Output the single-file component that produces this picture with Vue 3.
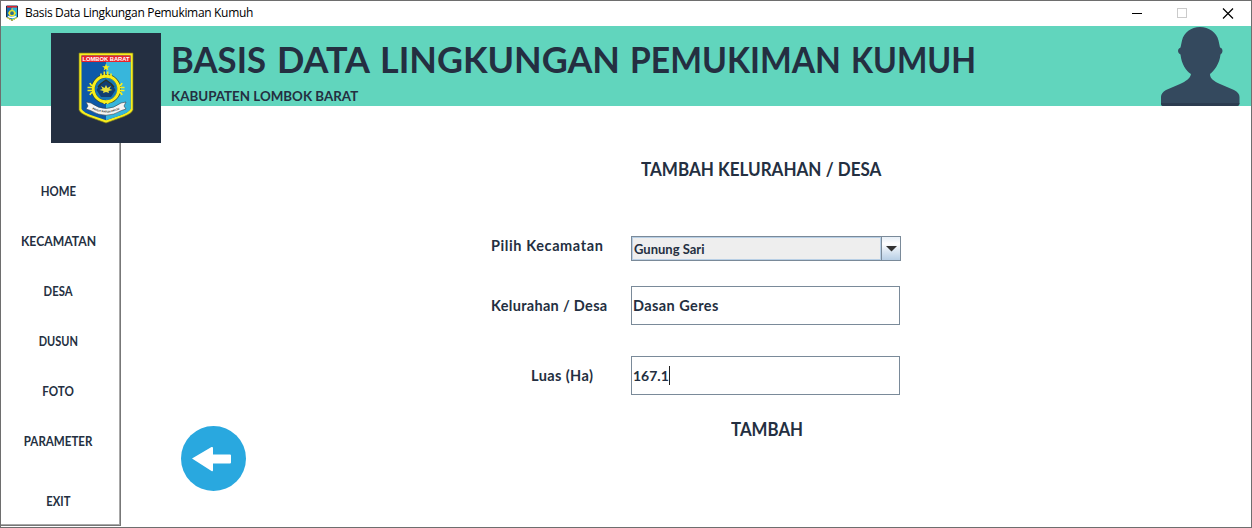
<script setup>
const menu = [
  { label: 'HOME', cls: 'home' },
  { label: 'KECAMATAN', cls: 'kecamatan' },
  { label: 'DESA', cls: 'desa' },
  { label: 'DUSUN', cls: 'dusun' },
  { label: 'FOTO', cls: 'foto' },
  { label: 'PARAMETER', cls: 'parameter' },
  { label: 'EXIT', cls: 'exit' },
]
const titleWords = [
  { word: 'BASIS', x: 0, width: 95 },
  { word: 'DATA', x: 106, width: 93 },
  { word: 'LINGKUNGAN', x: 209, width: 240 },
  { word: 'PEMUKIMAN', x: 459, width: 211 },
  { word: 'KUMUH', x: 680, width: 125 },
]
</script>

<template>
  <div class="window">
    <div class="titlebar">
      <svg class="app-icon" viewBox="0 0 16 16">
        <path d="M2.5 1H13.5V12L8 15.5L2.5 12Z" fill="#1470b4" stroke="#1c3350" />
        <path d="M8 2H13V12L8 15Z" fill="#29b4d8" />
        <path d="M3 1H13V2.6H3Z" fill="#d9232e" />
        <circle cx="8" cy="8.2" r="2.6" fill="#2b6e8d" stroke="#f4e72a" stroke-width="1.4" />
        <path d="M8 3.2V5.5M4 8.2H6M10 8.2H12" stroke="#f4e72a" stroke-width="1.2" />
        <path d="M4 11.4Q8 13.6 12 11.4" fill="none" stroke="#fff" stroke-width="1.5" />
        <path d="M3 12.6L8 15.3L13 12.6" fill="none" stroke="#f4e72a" />
      </svg>
      <span class="caption">Basis Data Lingkungan Pemukiman Kumuh</span>
      <svg class="controls" width="120" height="25" viewBox="0 0 120 25" shape-rendering="crispEdges">
        <path d="M1 12.5H11" stroke="#000" />
        <rect x="46.500" y="7.500" width="9" height="9" fill="none" stroke="#cbcbcb" />
        <path d="M92 7.500L102 17.500M102 7.500L92 17.500" stroke="#000" stroke-width="1.200" shape-rendering="auto" />
      </svg>
    </div>

    <header class="header">
      <div class="logo">
        <svg class="crest" width="56" height="72" viewBox="0 0 56 72">
          <path d="M1 1H55V58Q54 61 46 64.500L28 71L10 64.500Q2 61 1 58Z" fill="#f8ee1c" stroke="#77751d" stroke-width=".7" />
          <path d="M3.500 3.500H52.500V57Q50 60.500 44 62.700L28 68.200L12 62.700Q6 60.500 3.500 57Z" fill="#0d59a8" />
          <path d="M28 4H52.500V57Q50 60.500 44 62.700L28 68.200Z" fill="#37b6dc" />
          <path d="M3.500 3.500H52.500V10H3.500Z" fill="#e9232b" />
          <text x="28" y="8.900" text-anchor="middle" class="crest-name">LOMBOK BARAT</text>
          <path d="M28 11.500L29 14.200H31.800L29.600 15.900L30.400 18.600L28 17L25.600 18.600L26.400 15.900L24.200 14.200H27Z" fill="#f8ee1c" />
          <circle cx="28" cy="37" r="13" fill="none" stroke="#3c4b27" stroke-width="3.800" />
          <g fill="none" stroke="#f8ee1c" stroke-width="1.600">
            <circle cx="28" cy="37" r="12.800" stroke-width="3" />
            <path d="M26.300 25V19.500M29.700 25V19.500M23 26V21.500M33 26V21.500M26.300 49V52M29.700 49V52" />
            <path d="M16 35.500H9.500M16 38.500H9.500M40 35.500H46.500M40 38.500H46.500" />
            <path d="M17 32.500Q13 35 12 31M17 41.500Q13 39 12 43M39 32.500Q43 35 44 31M39 41.500Q43 39 44 43" />
          </g>
          <circle cx="28" cy="37" r="10.800" fill="#1976b1" />
          <path d="M28 28.500L34 32L37.500 38L33 45H23L18.500 38L22 32Z" fill="#123e72" />
          <path d="M20 35Q23 31 28 28Q33 31 36 35" fill="none" stroke="#30331f" stroke-width="1.300" />
          <path d="M28 33L29.500 36L33 34L31.500 37L34.500 38L30.500 39L31 41L28 40L25 41L25.500 39L21.500 38L24.500 37L23 34L26.500 36Z" fill="#e8e13b" />
          <path d="M8 50L13 51Q28 62 43 51L48 50L46 54L48 57L43.500 58.500Q28 68 12.500 58.500L8 57L10 54Z" fill="#f5f5f4" stroke="#34404a" stroke-width=".6" />
          <path id="motto" d="M12 56Q28 65.500 44 56" fill="none" />
          <text class="motto" text-anchor="middle"><textPath href="#motto" startOffset="50%">PATUT PATUH PATJU</textPath></text>
        </svg>
      </div>
      <div class="heading">
        <svg class="title" width="820" height="44" viewBox="0 0 820 44">
          <text v-for="t in titleWords" :key="t.word" :x="t.x" y="35" :textLength="t.width" lengthAdjust="spacingAndGlyphs">{{ t.word }}</text>
        </svg>
        <p>KABUPATEN LOMBOK BARAT</p>
      </div>
      <svg class="avatar" width="80" height="80" viewBox="0 0 80 80">
        <path d="M40 1C49 1 56.500 6.500 58.500 14.500L60 21.500C63.500 22.500 63 27 60.500 28.500C59.500 38 54 45 50 48C50 53 54 55 60 58L74 64Q79.500 67 79.500 71V77Q79.500 80 77 80H3Q1 80 1 77V71Q1 67 6 64L20 58C26 55 30 53 31 48C26 45 21.500 38 20.500 28.500C17.500 27 17 23 20.500 21.500L22 14.500C24 6.500 31 1 40 1Z" fill="#34495e" />
        <path d="M1 77H79.500Q79 80 77 80H3Q1 80 1 77Z" fill="#2c3c50" />
      </svg>
    </header>

    <div class="body">
      <nav class="sidebar">
        <a v-for="m in menu" :key="m.label" :class="['item', m.cls]"><span>{{ m.label }}</span></a>
      </nav>
      <div class="back">
        <svg width="65" height="65" viewBox="0 0 65 65">
          <circle cx="32.500" cy="32.500" r="32.500" fill="#29a8df" />
          <path d="M11 32.500L30.500 21Q32 20.500 32 22V28.500H49Q50 28.500 50 29.500V36.500Q50 37.500 49 37.500H32V44Q32 46 30.500 45Z" fill="#fff" />
        </svg>
      </div>
      <main class="form">
        <h2>TAMBAH KELURAHAN / DESA</h2>
        <div class="row select-row">
          <label class="l1">Pilih Kecamatan</label>
          <div class="combo">
            <div class="value">Gunung Sari</div>
            <div class="arrow">
              <svg width="11" height="6" viewBox="0 0 11 6"><path d="M0 0H11L5.500 5.500Z" fill="#333" /></svg>
            </div>
          </div>
        </div>
        <div class="row desa-row">
          <label class="l2">Kelurahan / Desa</label>
          <div class="field"><span class="v2">Dasan Geres</span></div>
        </div>
        <div class="row luas-row">
          <label class="l3">Luas (Ha)</label>
          <div class="field"><span class="v3">167.1</span><i class="caret"></i></div>
        </div>
        <div class="submit">TAMBAH</div>
      </main>
    </div>
  </div>
</template>

<style>
body { margin: 0; background: #fff; }
</style>

<style scoped>
.window {
  box-sizing: border-box;
  width: 1252px;
  height: 528px;
  border: 1px solid #6e6e6e;
  background: #fff;
  color: #242f41;
  font-family: Lato, "Liberation Sans", sans-serif;
  font-weight: 700;
  overflow: hidden;
  white-space: nowrap;
}
.titlebar { display: flex; height: 25px; }
.app-icon { width: 16px; height: 16px; margin: 4px 0 0 3px; }
.caption {
  margin-left: 5px;
  font: 400 12px/24px "Open Sans", "Noto Sans", sans-serif;
  letter-spacing: -0.32px;
  color: #000;
}
.controls { margin-left: auto; }
.header { display: flex; height: 80px; background: #61d5bd; }
.logo {
  display: flex;
  align-items: center;
  justify-content: center;
  width: 110px;
  height: 110px;
  margin: 7px 0 0 50px;
  background: #242f41;
  position: relative;
  z-index: 1;
}
.crest { overflow: visible; }
.crest-name { font: 700 5.800px "Liberation Sans", sans-serif; fill: #fff; }
.motto { font: 700 2.800px "Liberation Sans", sans-serif; fill: #222; }
.heading { margin-left: 10px; }
.title { display: block; margin-top: 12px; overflow: visible; font-size: 36px; fill: #242f41; }
.heading p {
  width: 300px;
  margin: 5px 0 0;
  font-size: 14px;
  line-height: 18px;
  transform: scaleX(0.954);
  transform-origin: left;
}
.avatar { margin-left: auto; margin-right: 11px; }
.body { display: flex; height: 421px; }
.sidebar {
  box-sizing: border-box;
  display: flex;
  flex-direction: column;
  width: 120px;
  height: 420px;
  padding-top: 60px;
  border-right: 1px solid #777;
  border-bottom: 1px solid #777;
  box-shadow: inset -1px -1px #a8a8a8;
}
.item { height: 50px; line-height: 51px; font-size: 12.5px; text-align: center; padding-right: 4px; }
.item span { display: inline-block; }
.home span { transform: scaleX(0.91); }
.kecamatan span { transform: scaleX(0.975); }
.desa span { transform: scaleX(0.9); }
.dusun span { transform: scaleX(0.88); }
.foto span { transform: scaleX(0.93); }
.parameter span { transform: scaleX(0.925); }
.exit { margin-top: 10px; }
.exit span { transform: scaleX(0.9); }
.back { margin: 320px 0 0 60px; height: 65px; width: 65px; }
.form { width: 420px; margin-left: 245px; }
h2 {
  width: 260px;
  margin: 50px 0 0 150px;
  font-size: 18px;
  line-height: 26px;
  transform: scaleX(0.946);
  transform-origin: left;
}
.row { display: flex; font-size: 14.5px; }
.row label { width: 140px; }
.l1 { letter-spacing: 0.6px; }
.l2 { letter-spacing: 0.31px; }
.l3 { letter-spacing: 0.4px; }
.v2 { letter-spacing: 0.42px; }
.v3 { font-size: 14px; }
.select-row { margin-top: 54px; height: 25px; line-height: 20px; }
.combo { box-sizing: border-box; display: flex; width: 270px; height: 25px; border: 1px solid #7a8a99; }
.value { flex: 1; background: #eee; border: 1px solid #b8cfe5; padding-left: 1px; font-size: 13px; line-height: 22px; }
.arrow {
  display: flex;
  align-items: center;
  justify-content: center;
  width: 18px;
  border-left: 1px solid #7a8a99;
  background: linear-gradient(#e7eff7, #fff 30%, #dde8f3 60%, #b8cfe5);
}
.desa-row { margin-top: 25px; line-height: 39px; }
.luas-row { margin-top: 31px; line-height: 39px; }
.row .l3 { width: 100px; padding-left: 40px; }
.field { box-sizing: border-box; display: flex; align-items: center; width: 269px; height: 39px; border: 1px solid #7a8a99; padding-left: 1px; line-height: 37px; }
.caret { width: 1px; height: 19px; background: #222; }
.submit {
  width: 100px;
  margin: 21px 0 0 240px;
  font-size: 18px;
  line-height: 26px;
  transform: scaleX(0.935);
  transform-origin: left;
}
</style>
